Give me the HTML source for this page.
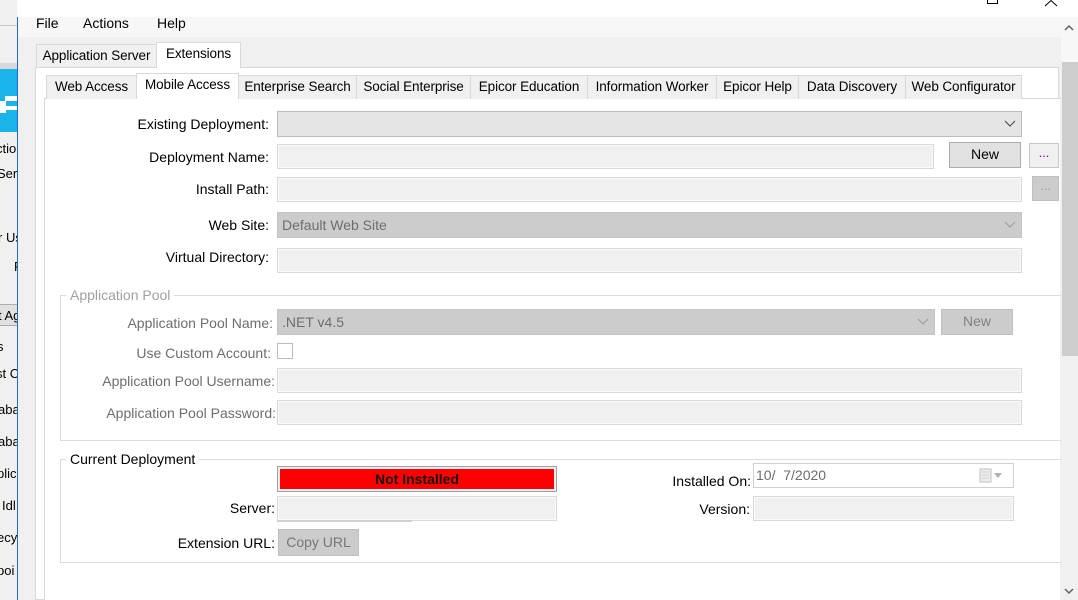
<!DOCTYPE html>
<html><head><meta charset="utf-8"><style>
*{box-sizing:border-box;margin:0;padding:0}
body{width:1078px;height:600px;overflow:hidden;background:#fff;font-family:"Liberation Sans",sans-serif;font-size:13px;color:#000;position:relative}
.a{position:absolute}
.lbl{position:absolute;text-align:right;white-space:nowrap;line-height:16px;font-size:14px}
.fld{position:absolute;background:#f0f0f0;border:1px solid #d9d9d9;box-shadow:inset 0 0 0 1px #fafafa}
.cmb{position:absolute;background:#e5e5e5;border:1px solid #bcbcbc}
.cmbd{position:absolute;background:#cccccc;border:1px solid #c4c4c4;color:#6d6d6d;padding:4px 4px;line-height:16px;font-size:14px}
.btn{position:absolute;background:#e1e1e1;border:1px solid #adadad;text-align:center;line-height:22px;font-size:14px}
.btnd{position:absolute;background:#cccccc;border:1px solid #bfbfbf;text-align:center;color:#838383;line-height:22px;font-size:14px}
.tab{position:absolute;background:#f0f0f0;border:1px solid #d9d9d9;border-bottom:none;text-align:center;line-height:22px;white-space:nowrap;font-size:13.5px;letter-spacing:-0.1px}
.tabs{background:#fff;z-index:2}
.grp{position:absolute;border:1px solid #dcdcdc}
.gt{position:absolute;background:#fff;padding:0 4px;line-height:16px;font-size:14px}
.chev{position:absolute;width:12px;height:8px}
.left{position:absolute;left:0;white-space:nowrap;line-height:16px}
</style></head><body>
<div class="a" style="left:0;top:0;width:17px;height:600px;background:#f0f0f0"></div>
<div class="a" style="left:0;top:25px;width:17px;height:1px;background:#c8c8c8"></div>
<div class="a" style="left:0;top:63px;width:17px;height:6px;background:#d8d8d8"></div>
<div class="a" style="left:0;top:69px;width:17px;height:63px;background:#1ab3ea"></div>
<div class="a" style="left:5px;top:96px;width:12px;height:5px;background:#fff"></div>
<div class="a" style="left:0;top:101px;width:6px;height:12px;background:#fff"></div>
<div class="a" style="left:0;top:106px;width:17px;height:4px;background:#fff"></div>
<div style="position:absolute;left:0;top:0;width:17px;height:600px;overflow:hidden">
<div class="left" style="top:141px;left:-4px">ctio</div>
<div class="left" style="top:166px;left:-3px">Serv</div>
<div class="left" style="top:230px;left:-2px">r Us</div>
<div class="left" style="top:259px;left:14px">F</div>
<div class="a" style="left:0;top:304px;width:17px;height:22px;background:#e1e1e1;border-top:1px solid #adadad;border-bottom:1px solid #adadad"></div>
<div class="left" style="top:308px;left:-2px">t Ag</div>
<div class="left" style="top:339px;left:-3px">s</div>
<div class="left" style="top:366px;left:-4px">st C</div>
<div class="left" style="top:402px;left:-2px">aba</div>
<div class="left" style="top:434px;left:-2px">aba</div>
<div class="left" style="top:466px;left:-3px">plica</div>
<div class="left" style="top:498px;left:2px">Idl</div>
<div class="left" style="top:530px;left:-3px">ecyc</div>
<div class="left" style="top:563px;left:-3px">poi</div>
</div>
<div class="a" style="left:17px;top:17px;width:1px;height:583px;background:#1e6ec8"></div>
<div class="a" style="left:987px;top:0;width:11px;height:4px;border:1px solid #000;border-top:none"></div>
<svg class="a" style="left:1043px;top:0" width="16" height="7"><path d="M2 6L8 0.5L14 6" stroke="#000" stroke-width="1" fill="none"/></svg>
<div class="a" style="left:18px;top:17px;width:1043px;height:583px;background:#f0f0f0"></div>
<div class="a" style="left:18px;top:17px;width:1043px;height:20px;background:#f7f7f7"></div>
<div class="a" style="left:36px;top:14px;font-size:14px;line-height:18px">File</div>
<div class="a" style="left:83px;top:14px;font-size:14px;line-height:18px">Actions</div>
<div class="a" style="left:157px;top:14px;font-size:14px;line-height:18px">Help</div>
<div class="tab" style="left:36px;top:44px;width:121px;height:24px">Application Server</div>
<div class="tab tabs" style="left:156px;top:42px;width:85px;height:26px;line-height:22px">Extensions</div>
<div class="a" style="left:35px;top:67px;width:1024px;height:533px;background:#fff;border:1px solid #d9d9d9"></div>
<div class="tab" style="left:46px;top:75px;width:91px;height:24px;z-index:3">Web Access</div>
<div class="tab tabs" style="left:136px;top:73px;width:103px;height:26px;z-index:4">Mobile Access</div>
<div class="tab" style="left:238px;top:75px;width:119px;height:24px;z-index:3">Enterprise Search</div>
<div class="tab" style="left:356px;top:75px;width:115px;height:24px;z-index:3">Social Enterprise</div>
<div class="tab" style="left:470px;top:75px;width:118px;height:24px;z-index:3">Epicor Education</div>
<div class="tab" style="left:587px;top:75px;width:130px;height:24px;z-index:3">Information Worker</div>
<div class="tab" style="left:716px;top:75px;width:83px;height:24px;z-index:3">Epicor Help</div>
<div class="tab" style="left:798px;top:75px;width:108px;height:24px;z-index:3">Data Discovery</div>
<div class="tab" style="left:905px;top:75px;width:117px;height:24px;z-index:3">Web Configurator</div>
<div class="a" style="left:44px;top:98px;width:1016px;height:502px;background:#fff;border-left:1px solid #d9d9d9;border-top:1px solid #d9d9d9;z-index:2"></div>
<div style="position:absolute;left:0;top:0;width:1078px;height:600px;z-index:5">
<div class="lbl" style="right:809px;top:116px">Existing Deployment:</div>
<div class="cmb" style="left:277px;top:111px;width:745px;height:26px"></div>
<svg class="chev" style="left:1004px;top:120px"><path d="M1 1L6 6L11 1" stroke="#444" fill="none"/></svg>
<div class="lbl" style="right:809px;top:149px">Deployment Name:</div>
<div class="fld" style="left:277px;top:144px;width:657px;height:25px"></div>
<div class="btn" style="left:949px;top:142px;width:72px;height:26px">New</div>
<div class="btn" style="left:1029px;top:143px;width:30px;height:25px;background:#f0f0f0;border-color:#c8c8c8;color:#808;line-height:18px;font-size:13px">...</div>
<div class="lbl" style="right:809px;top:181px">Install Path:</div>
<div class="fld" style="left:277px;top:177px;width:745px;height:25px"></div>
<div class="btnd" style="left:1032px;top:176px;width:27px;height:25px;line-height:18px;color:#999;font-size:13px">...</div>
<div class="lbl" style="right:809px;top:217px">Web Site:</div>
<div class="cmbd" style="left:277px;top:212px;width:745px;height:26px">Default Web Site</div>
<svg class="chev" style="left:1004px;top:221px"><path d="M1 1L6 6L11 1" stroke="#999" fill="none"/></svg>
<div class="lbl" style="right:809px;top:249px">Virtual Directory:</div>
<div class="fld" style="left:277px;top:248px;width:745px;height:25px"></div>
<div class="grp" style="left:60px;top:295px;width:1001px;height:146px;border-right:none"></div>
<div class="gt" style="left:66px;top:287px;color:#a0a0a0">Application Pool</div>
<div class="lbl" style="right:805px;top:315px;color:#6d6d6d">Application Pool Name:</div>
<div class="cmbd" style="left:277px;top:309px;width:658px;height:26px">.NET v4.5</div>
<svg class="chev" style="left:917px;top:318px"><path d="M1 1L6 6L11 1" stroke="#999" fill="none"/></svg>
<div class="btnd" style="left:941px;top:309px;width:72px;height:26px">New</div>
<div class="lbl" style="right:807px;top:345px;color:#6d6d6d">Use Custom Account:</div>
<div class="a" style="left:277px;top:343px;width:16px;height:16px;border:1px solid #bcbcbc;background:#fff"></div>
<div class="lbl" style="right:803px;top:373px;color:#6d6d6d">Application Pool Username:</div>
<div class="fld" style="left:277px;top:368px;width:745px;height:25px"></div>
<div class="lbl" style="right:802px;top:405px;color:#6d6d6d">Application Pool Password:</div>
<div class="fld" style="left:277px;top:400px;width:745px;height:25px"></div>
<div class="grp" style="left:60px;top:459px;width:1001px;height:104px;border-right:none"></div>
<div class="gt" style="left:66px;top:451px">Current Deployment</div>
<div class="a" style="left:277px;top:466px;width:280px;height:26px;background:#f0f0f0;border:1px solid #a0a0a0;padding:2px"><div style="background:#ff0000;height:100%;text-align:center;font-weight:bold;line-height:20px;color:#111;font-size:14px">Not Installed</div></div>
<div class="lbl" style="right:803px;top:500px">Server:</div>
<div class="fld" style="left:277px;top:496px;width:280px;height:25px"></div>
<div class="a" style="left:277px;top:520px;width:135px;height:2px;background:#d0d0d0"></div>
<div class="lbl" style="right:803px;top:535px">Extension URL:</div>
<div class="btnd" style="left:278px;top:529px;width:81px;height:27px;line-height:24px;color:#777;font-size:14px">Copy URL</div>
<div class="lbl" style="right:327px;top:473px">Installed On:</div>
<div class="a" style="left:753px;top:463px;width:261px;height:25px;border:1px solid #d0d0d0;background:#fff;color:#6d6d6d;font-size:14px;padding:3px 2px;line-height:16px">10/&nbsp; 7/2020</div>
<svg class="a" style="left:979px;top:467px" width="28" height="18"><rect x="1" y="2" width="11" height="13" fill="#ececec" stroke="#c0c0c0"/><path d="M3 5h7M3 8h7M3 11h7" stroke="#d0d0d0"/><path d="M15 6h8l-4 5z" fill="#b0b0b0"/></svg>
<div class="lbl" style="right:328px;top:501px">Version:</div>
<div class="fld" style="left:753px;top:496px;width:261px;height:25px"></div>
</div>
<div class="a" style="left:1061px;top:17px;width:17px;height:583px;background:#f0f0f0"></div>
<div class="a" style="left:1061px;top:17px;width:17px;height:45px;background:#f7f7f7"></div>
<div class="a" style="left:1062px;top:62px;width:16px;height:294px;background:#cdcdcd"></div>
<svg class="a" style="left:1063px;top:24px" width="12" height="8"><path d="M2 6L6 2L10 6" stroke="#606060" stroke-width="1.5" fill="none"/></svg>
<svg class="a" style="left:1063px;top:587px" width="12" height="8"><path d="M2 2L6 6L10 2" stroke="#606060" stroke-width="1.5" fill="none"/></svg>
</body></html>
